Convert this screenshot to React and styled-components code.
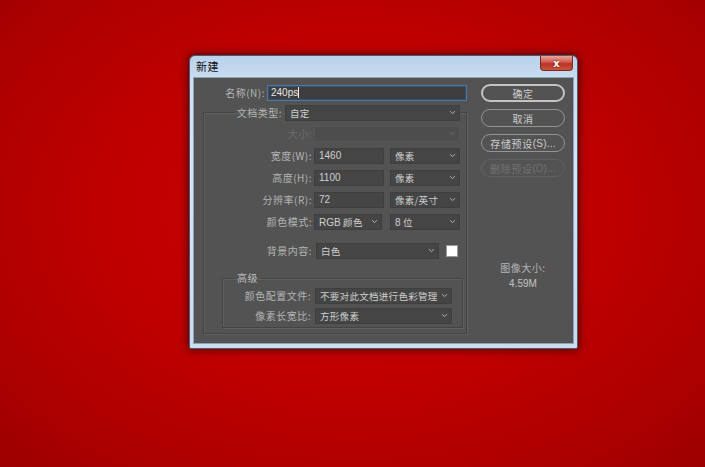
import React from "react";
import styled, { createGlobalStyle } from "styled-components";

const Global = createGlobalStyle`
  html, body { margin: 0; padding: 0; }
  body { background: #b80000; font-family: "Noto Sans CJK SC", "Noto Sans", sans-serif; }
`;

const Page = styled.div`
  width: 705px; height: 467px; box-sizing: border-box; padding: 55px 0 0 189px; overflow: hidden;
  background: radial-gradient(ellipse 75% 80% at 50% 45%, #c90404 0%, #c00000 45%, #aa0000 80%, #980000 100%);
`;

const Window = styled.div`
  width: 389px; height: 294px; box-sizing: border-box; display: flex; flex-direction: column;
  border: 1px solid #4a5d70; border-radius: 6px 6px 2px 2px; padding: 0 4px 4px;
  background: linear-gradient(180deg, #b9d1ea 0%, #cfe0f2 10%, #d6e5f4 40%, #cbdcee 100%);
  box-shadow: 0 0 8px 1px rgba(40, 0, 0, 0.75);
`;

const TitleBar = styled.div`
  height: 21px; flex: none; display: flex; justify-content: space-between; align-items: flex-start;
  padding-left: 2px;
  & .title { font-size: 11px; line-height: 21px; color: #111; letter-spacing: 0.5px; }
`;

const CloseBtn = styled.div`
  width: 33px; height: 15px; box-sizing: border-box; display: flex; align-items: center; justify-content: center;
  border: 1px solid #7a2a22; border-top: none; border-radius: 0 0 4px 4px;
  background: linear-gradient(180deg, #e4a79c 0%, #d0584a 45%, #b83325 55%, #c8543f 100%);
  color: #fff; font: bold 10px "DejaVu Sans", sans-serif; text-shadow: 0 0 2px #600;
`;

const Body = styled.div`
  flex: 1; display: flex; background: #535353; padding: 6px 0 0 0;
  border: 1px solid #8ea3b8; margin: 0 -1px;
`;

const LeftCol = styled.div`
  width: 277px; display: flex; flex-direction: column;
`;

const RightCol = styled.div`
  margin-left: 10px; width: 84px; display: flex; flex-direction: column; gap: 7px;
`;

const Row = styled.div`
  display: flex; align-items: center; height: 17px; gap: ${p => p.$gap || 2}px;
  margin-top: ${p => p.$mt || 0}px;
`;

const Label = styled.span`
  width: ${p => p.$w}px; flex: none; text-align: right; font-size: 10px; letter-spacing: 0.5px;
  color: ${p => (p.$disabled ? "#6d6d6d" : "#b4b4b4")}; white-space: nowrap;
`;

const NameInput = styled.div`
  width: 200px; height: 16px; box-sizing: border-box; background: #3e3e3e;
  border: 1px solid #4e78a6; box-shadow: inset 0 0 0 1px #35506e;
  color: #e6e6e6; font: 10px "Liberation Sans", sans-serif; padding-left: 3px; line-height: 14px;
  & .caret { display: inline-block; width: 1px; height: 11px; background: #eee; vertical-align: -2px; }
`;

const Field = styled.div`
  width: ${p => p.$w}px; height: 16px; box-sizing: border-box; flex: none;
  display: flex; align-items: center; justify-content: space-between;
  background: ${p => (p.$disabled ? "#4d4d4d" : "#454545")};
  border: 1px solid ${p => (p.$disabled ? "#555" : "#3f3f3f")};
  padding: 0 3px 0 4px; font-size: 9.5px; letter-spacing: 0.3px; color: #cfcfcf; white-space: nowrap; overflow: hidden;
  & .num { font-family: "Liberation Sans", sans-serif; font-size: 10px; letter-spacing: 0; }
`;

const Swatch = styled.div`
  width: 10px; height: 10px; background: #fff; border: 1px solid #9a9a9a; margin-left: 3px;
`;

const Group = styled.fieldset`
  margin: 3px 0 0 9px; width: 264px; height: 230px; box-sizing: border-box; padding: 0 0 4px 0;
  border: 1px solid #444; box-shadow: inset 1px 1px 0 #5f5f5f, 1px 1px 0 #5f5f5f;
  min-inline-size: 0;
`;

const GroupLegend = styled.legend`
  padding: 0; margin-left: 30px; height: 16px;
`;

const Advanced = styled.fieldset`
  margin: 12px 0 0 18px; width: 241px; box-sizing: border-box; padding: 2px 0 3px 0;
  border: 1px solid #444; box-shadow: inset 1px 1px 0 #5f5f5f, 1px 1px 0 #5f5f5f;
  display: flex; flex-direction: column; gap: 3px; min-inline-size: 0;
`;

const AdvLegend = styled.legend`
  margin-left: 11px; padding: 0 3px; font-size: 10px; line-height: 14px; color: #bcbcbc; letter-spacing: 0.5px;
`;

const Rows = styled.div`
  display: flex; flex-direction: column; gap: 5px; margin-top: 5px;
`;

const Button = styled.div`
  height: 18px; box-sizing: border-box; border-radius: 9px; display: flex; align-items: center; justify-content: center;
  border: ${p => (p.$primary ? "2px solid #c4c4c4" : `1px solid ${p.$disabled ? "#616161" : "#949494"}`)};
  color: ${p => (p.$disabled ? "#727272" : "#cccccc")}; font-size: 10px; letter-spacing: 0.6px;
  & .en { font-family: "Liberation Sans", sans-serif; letter-spacing: 0.2px; }
`;

const SizeInfo = styled.div`
  margin-top: 76px; display: flex; flex-direction: column; align-items: center; gap: 3px;
  color: #b4b4b4; font-size: 10px; letter-spacing: 0.5px;
  & .val { font-family: "Liberation Sans", sans-serif; letter-spacing: 0; color: #c4c4c4; }
`;

const Chevron = ({ dim }) => (
  <svg width="7" height="5" viewBox="0 0 7 5" style={{ flex: "none" }}>
    <path d="M1 1.2 L3.5 3.6 L6 1.2" fill="none" stroke={dim ? "#6a6a6a" : "#b0b0b0"} strokeWidth="1" />
  </svg>
);

const Select = ({ w, children, disabled }) => (
  <Field $w={w} $disabled={disabled}>
    <span>{children}</span>
    <Chevron dim={disabled} />
  </Field>
);

export default function App() {
  return (
    <Page>
      <Global />
      <Window>
        <TitleBar>
          <span className="title">新建</span>
          <CloseBtn>x</CloseBtn>
        </TitleBar>
        <Body>
          <LeftCol>
            <Row>
              <Label $w={71}>名称(N):</Label>
              <NameInput>240ps<span className="caret" /></NameInput>
            </Row>
            <Group>
              <GroupLegend>
                <Row $gap={3}>
                  <Label $w={48}>文档类型:</Label>
                  <Select w={175}>自定</Select>
                </Row>
              </GroupLegend>
              <Rows>
                <Row>
                  <Label $w={108} $disabled>大小:</Label>
                  <Select w={146} disabled></Select>
                </Row>
                <Row>
                  <Label $w={108}>宽度(W):</Label>
                  <Field $w={70}><span className="num">1460</span></Field>
                  <Row $gap={0} style={{ marginLeft: 4 }}><Select w={70}>像素</Select></Row>
                </Row>
                <Row>
                  <Label $w={108}>高度(H):</Label>
                  <Field $w={70}><span className="num">1100</span></Field>
                  <Row $gap={0} style={{ marginLeft: 4 }}><Select w={70}>像素</Select></Row>
                </Row>
                <Row>
                  <Label $w={108}>分辨率(R):</Label>
                  <Field $w={70}><span className="num">72</span></Field>
                  <Row $gap={0} style={{ marginLeft: 4 }}><Select w={70}>像素/英寸</Select></Row>
                </Row>
                <Row>
                  <Label $w={108}>颜色模式:</Label>
                  <Select w={68}><span className="num">RGB</span> 颜色</Select>
                  <Row $gap={0} style={{ marginLeft: 6 }}><Select w={70}><span className="num">8</span> 位</Select></Row>
                </Row>
              </Rows>
              <Row $mt={12} $gap={4}>
                <Label $w={108}>背景内容:</Label>
                <Select w={123}>白色</Select>
                <Swatch />
              </Row>
              <Advanced>
                <AdvLegend>高级</AdvLegend>
                <Row $gap={4}>
                  <Label $w={88}>颜色配置文件:</Label>
                  <Select w={137}>不要对此文档进行色彩管理</Select>
                </Row>
                <Row $gap={4}>
                  <Label $w={88}>像素长宽比:</Label>
                  <Select w={137}>方形像素</Select>
                </Row>
              </Advanced>
            </Group>
          </LeftCol>
          <RightCol>
            <Button $primary>确定</Button>
            <Button>取消</Button>
            <Button>存储预设<span className="en">(S)...</span></Button>
            <Button $disabled>删除预设<span className="en">(D)...</span></Button>
            <SizeInfo>
              <span>图像大小:</span>
              <span className="val">4.59M</span>
            </SizeInfo>
          </RightCol>
        </Body>
      </Window>
    </Page>
  );
}
